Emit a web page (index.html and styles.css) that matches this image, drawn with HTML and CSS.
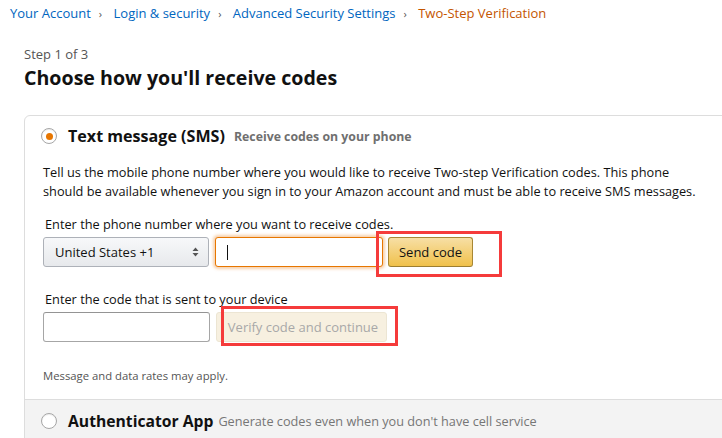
FILE: index.html
```html
<!DOCTYPE html>
<html>
<head>
<meta charset="utf-8">
<link rel="stylesheet" href="styles.css">
</head>
<body>
<nav class="breadcrumb">
  <a class="crumb">Your Account</a><span class="sep">›</span>
  <a class="crumb">Login &amp; security</a><span class="sep">›</span>
  <a class="crumb">Advanced Security Settings</a><span class="sep">›</span>
  <span class="crumb current">Two-Step Verification</span>
</nav>
<main class="page">
  <div class="step">Step 1 of 3</div>
  <h1 class="title">Choose how you'll receive codes</h1>
  <div class="card">
    <section class="option selected">
      <div class="option-head">
        <span class="radio checked"></span>
        <span class="option-name">Text message (SMS)</span>
        <span class="option-sub bold">Receive codes on your phone</span>
      </div>
      <div class="option-body">
        <p class="desc">Tell us the mobile phone number where you would like to receive Two-step Verification codes. This phone<br>should be available whenever you sign in to your Amazon account and must be able to receive SMS messages.</p>
        <div class="label">Enter the phone number where you want to receive codes.</div>
        <div class="row">
          <div class="select">
            <span>United States +1</span>
            <svg class="arrows" width="7" height="10" viewBox="0 0 7 10"><path d="M0.5 4 L3.5 0.5 L6.5 4 Z M0.5 6 L3.5 9.5 L6.5 6 Z" fill="#555"/></svg>
          </div>
          <div class="input phone focused"><span class="caret"></span></div>
          <div class="btn-wrap">
            <button class="btn primary">Send code</button>
            <span class="annot annot-send"></span>
          </div>
        </div>
        <div class="label second">Enter the code that is sent to your device</div>
        <div class="row">
          <div class="input code"></div>
          <div class="btn-wrap">
            <button class="btn disabled">Verify code and continue</button>
            <span class="annot annot-verify"></span>
          </div>
        </div>
        <div class="note">Message and data rates may apply.</div>
      </div>
    </section>
    <section class="option other">
      <div class="option-head">
        <span class="radio"></span>
        <span class="option-name">Authenticator App</span>
        <span class="option-sub">Generate codes even when you don't have cell service</span>
      </div>
    </section>
  </div>
</main>
</body>
</html>
```
FILE: styles.css
```css
html, body {
  margin: 0;
  padding: 0;
  overflow: hidden;
  background: #fff;
}
body {
  font-family: "Open Sans", "Noto Sans", sans-serif;
  color: #111;
  font-size: 12.75px;
}
.breadcrumb {
  height: 26px;
  line-height: 26px;
  padding-left: 10px;
  font-size: 13px;
  white-space: nowrap;
}
.crumb {
  color: #0066c0;
}
.crumb.current {
  color: #c45500;
}
.sep {
  color: #555;
  font-size: 11px;
  margin: 0 8px;
}
.page {
  padding-left: 24px;
}
.step {
  margin-top: 19px;
  line-height: 18px;
  color: #555;
  font-size: 13px;
}
.title {
  margin: 1px 0 0;
  font-size: 19.6px;
  line-height: 28px;
  font-weight: 700;
  color: #111;
}
.card {
  margin-top: 23px;
  margin-right: -20px;
  border: 1px solid #ddd;
  border-radius: 6px 6px 0 0;
  overflow: hidden;
}
.option-head {
  display: flex;
  align-items: center;
  height: 24px;
  padding: 8px 0 0 16px;
  white-space: nowrap;
}
.radio {
  width: 14px;
  height: 14px;
  border: 1px solid #a6a6a6;
  border-radius: 50%;
  background: #fff;
  display: inline-flex;
  align-items: center;
  justify-content: center;
  box-shadow: 0 1px 1px rgba(0,0,0,0.08) inset;
  margin-right: 11px;
}
.radio.checked::after {
  content: "";
  width: 7px;
  height: 7px;
  border-radius: 50%;
  background: #e77600;
}
.option-name {
  font-size: 16.1px;
  font-weight: 700;
  color: #111;
}
.option.other .option-name {
  font-size: 15.7px;
}
.option-sub {
  margin-left: 5px;
  font-size: 12.7px;
  color: #767676;
}
.option-sub.bold {
  margin-left: 9px;
  font-size: 12.3px;
  font-weight: 700;
  color: #6f6f6f;
}
.option-body {
  padding: 0 18px 15px 18px;
}
.desc {
  margin: 15px 0 0;
  line-height: 19px;
  white-space: nowrap;
}
.label {
  margin-top: 14px;
  margin-bottom: 3px;
  line-height: 19px;
  padding-left: 2px;
}
.label.second {
  margin-top: 23px;
}
.row {
  display: flex;
  align-items: flex-start;
}
.select {
  box-sizing: border-box;
  width: 166px;
  height: 30px;
  border: 1px solid #adb1b8;
  border-radius: 3px;
  background: linear-gradient(#f7f8fa, #e7e9ec);
  display: flex;
  align-items: center;
  justify-content: space-between;
  padding: 0 9px 0 11px;
  color: #111;
  font-size: 13px;
}
.input {
  box-sizing: border-box;
  height: 30px;
  border: 1px solid #a6a6a6;
  border-top-color: #949494;
  border-radius: 3px;
  background: #fff;
  display: flex;
  align-items: center;
}
.input.phone {
  width: 168px;
  margin-left: 6px;
  margin-right: 5px;
}
.input.focused {
  border-color: #e77600;
  box-shadow: 0 0 3px 2px rgba(228,121,17,0.35);
}
.caret {
  width: 1px;
  height: 15px;
  background: #111;
  margin-left: 11px;
}
.input.code {
  width: 167px;
  margin-right: 6px;
}
.btn-wrap {
  position: relative;
}
.btn {
  box-sizing: border-box;
  height: 30px;
  border-radius: 3px;
  font-family: inherit;
  font-size: 13px;
  padding: 0;
  display: block;
}
.btn.primary {
  width: 85px;
  border: 1px solid #a88734;
  border-bottom-color: #9c7e31;
  background: linear-gradient(#f7dfa5, #f0c14b);
  color: #111;
}
.btn.disabled {
  width: 171px;
  border: 1px solid #ece5d3;
  background: #f7f0e0;
  color: #a8a8a8;
  padding-left: 3px;
}
.annot {
  position: absolute;
  box-sizing: border-box;
  border: 3px solid #f53b3b;
  pointer-events: none;
}
.annot-send {
  left: -12px;
  top: -6px;
  width: 126px;
  height: 46px;
}
.annot-verify {
  left: 5px;
  top: -6px;
  width: 177px;
  height: 40px;
}
.note {
  margin-top: 26px;
  font-size: 11.3px;
  line-height: 16px;
  color: #555;
}
.option.other {
  background: #f3f3f3;
  border-top: 1px solid #ddd;
  height: 40px;
}
.option.other .option-head {
  padding-top: 9px;
}
```
